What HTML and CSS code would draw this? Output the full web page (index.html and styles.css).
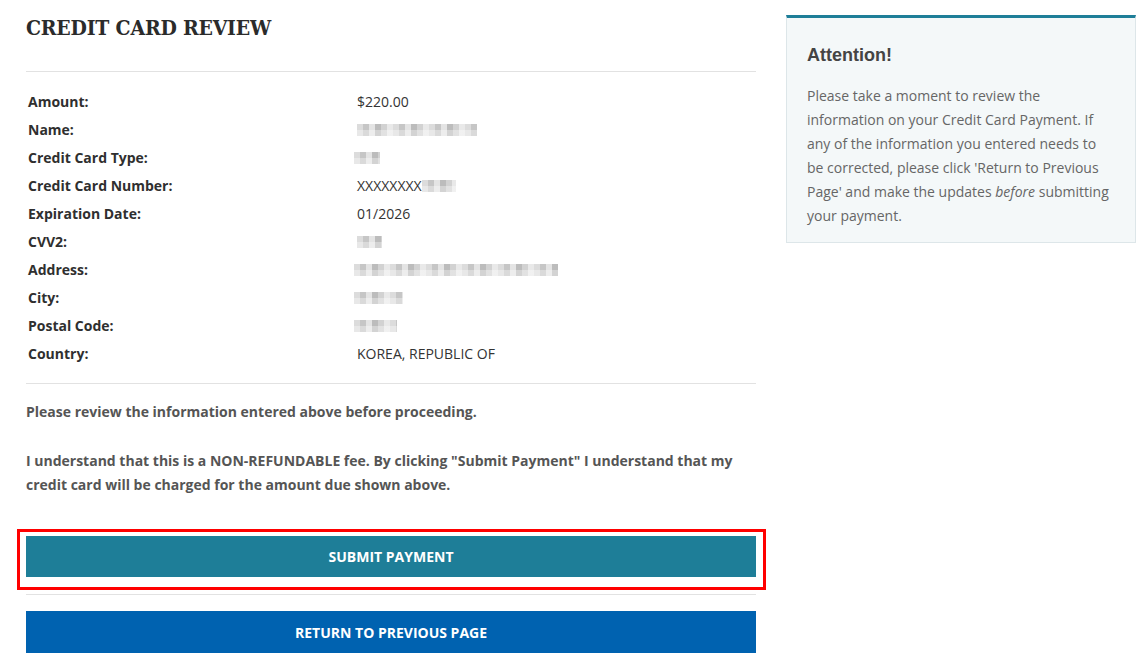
FILE: index.html
```html
<!DOCTYPE html>
<html lang="en">
<head>
<meta charset="utf-8">
<title>Credit Card Review</title>
<link rel="stylesheet" href="styles.css">
</head>
<body>
<div class="page">
  <main class="main">
    <h1 class="title">CREDIT CARD REVIEW</h1>
    <hr class="rule">
    <table class="review">
      <tr><th>Amount:</th><td>$220.00</td></tr>
      <tr><th>Name:</th><td><span class="blur w-name"></span></td></tr>
      <tr><th>Credit Card Type:</th><td><span class="blur w-type"></span></td></tr>
      <tr><th>Credit Card Number:</th><td>XXXXXXXX<span class="blur w-num"></span></td></tr>
      <tr><th>Expiration Date:</th><td>01/2026</td></tr>
      <tr><th>CVV2:</th><td><span class="blur w-cvv"></span></td></tr>
      <tr><th>Address:</th><td><span class="blur w-addr"></span></td></tr>
      <tr><th>City:</th><td><span class="blur w-city"></span></td></tr>
      <tr><th>Postal Code:</th><td><span class="blur w-post"></span></td></tr>
      <tr><th>Country:</th><td>KOREA, REPUBLIC OF</td></tr>
    </table>
    <hr class="rule rule-mid">
    <p class="note">Please review the information entered above before proceeding.</p>
    <p class="note note-gap">I understand that this is a NON-REFUNDABLE fee. By clicking "Submit Payment" I understand that my credit card will be charged for the amount due shown above.</p>
    <div class="submit-wrap">
      <button class="btn btn-submit" type="button">SUBMIT PAYMENT</button>
      <span class="highlight"></span>
    </div>
    <hr class="rule rule-btn">
    <button class="btn btn-return" type="button">RETURN TO PREVIOUS PAGE</button>
  </main>
  <aside class="side">
    <div class="panel">
      <h2 class="panel-title">Attention!</h2>
      <p class="panel-text">Please take a moment to review the information on your Credit Card Payment. If any of the information you entered needs to be corrected, please click 'Return to Previous Page' and make the updates <em>before</em> submitting your payment.</p>
    </div>
  </aside>
</div>
</body>
</html>
```

FILE: styles.css
```css
html, body {
  margin: 0;
  padding: 0;
  background: #ffffff;
}
body {
  font-family: "Open Sans", "Liberation Sans", sans-serif;
  font-size: 14px;
  color: #333;
}
.page {
  display: flex;
  align-items: flex-start;
  gap: 30px;
  padding-left: 26px;
}
.main {
  width: 730px;
  flex: none;
}
.title {
  margin: 0;
  padding-top: 14px;
  height: 71px;
  box-sizing: border-box;
  font-family: "DejaVu Serif Condensed", "DejaVu Serif", serif;
  font-stretch: condensed;
  font-weight: bold;
  font-size: 21px;
  line-height: 28px;
  color: #2b2b2b;
  letter-spacing: -0.2px;
}
.rule {
  border: 0;
  border-top: 1px solid #e2e2e2;
  margin: 0;
  height: 0;
}
.review {
  border-collapse: collapse;
  margin: 16px 0 15px;
  width: 100%;
}
.review th, .review td {
  padding: 0;
  height: 28px;
  line-height: 28px;
  text-align: left;
  vertical-align: middle;
}
.review th {
  width: 329px;
  padding-left: 2px;
  font-weight: bold;
  color: #2f2f2f;
}
.review td {
  color: #333;
}
.blur {
  display: inline-block;
  height: 12px;
  vertical-align: -1px;
  background:
    linear-gradient(180deg, rgba(255,255,255,0) 0 6px, rgba(255,255,255,0.35) 6px 12px),
    repeating-linear-gradient(90deg, #dcdcdc 0 6px, #c6c6c6 6px 12px, #e4e4e4 12px 18px, #bcbcbc 18px 24px, #d2d2d2 24px 30px, #e9e9e9 30px 36px);
}
.w-name { width: 120px; }
.w-type { width: 26px; margin-left: -3px; }
.w-num { width: 34px; }
.w-cvv { width: 25px; }
.w-addr { width: 204px; margin-left: -3px; }
.w-city { width: 49px; margin-left: -3px; }
.w-post { width: 43px; margin-left: -3px; }
.note {
  margin: 16px 0 0;
  font-weight: bold;
  line-height: 24px;
  color: #555;
}
.note-gap {
  margin-top: 25px;
}
.submit-wrap {
  position: relative;
  margin-top: 39px;
}
.btn {
  display: block;
  width: 100%;
  height: 41px;
  border: 0;
  padding: 0;
  font-family: "Open Sans", "Liberation Sans", sans-serif;
  font-weight: bold;
  font-size: 14px;
  color: #fff;
  cursor: pointer;
}
.btn-submit {
  background: #1e7e98;
}
.btn-return {
  background: #0062b0;
  height: 42px;
}
.highlight {
  position: absolute;
  left: -9px;
  right: -10px;
  top: -7px;
  bottom: -13px;
  border: 3px solid #ff0000;
  pointer-events: none;
}
.rule-btn {
  margin-top: 17px;
  margin-bottom: 16px;
}
.side {
  width: 350px;
  flex: none;
  padding-top: 15px;
}
.panel {
  background: #f4f8f9;
  border: 1px solid #dde6e9;
  border-top: 3px solid #1e7e98;
  padding: 25px 20px 14px;
}
.panel-title {
  margin: 0 0 17px;
  font-family: "Liberation Sans", Arial, sans-serif;
  font-weight: bold;
  font-size: 18px;
  line-height: 24px;
  color: #444;
}
.panel-text {
  margin: 0;
  line-height: 24px;
  color: #666;
}
```
